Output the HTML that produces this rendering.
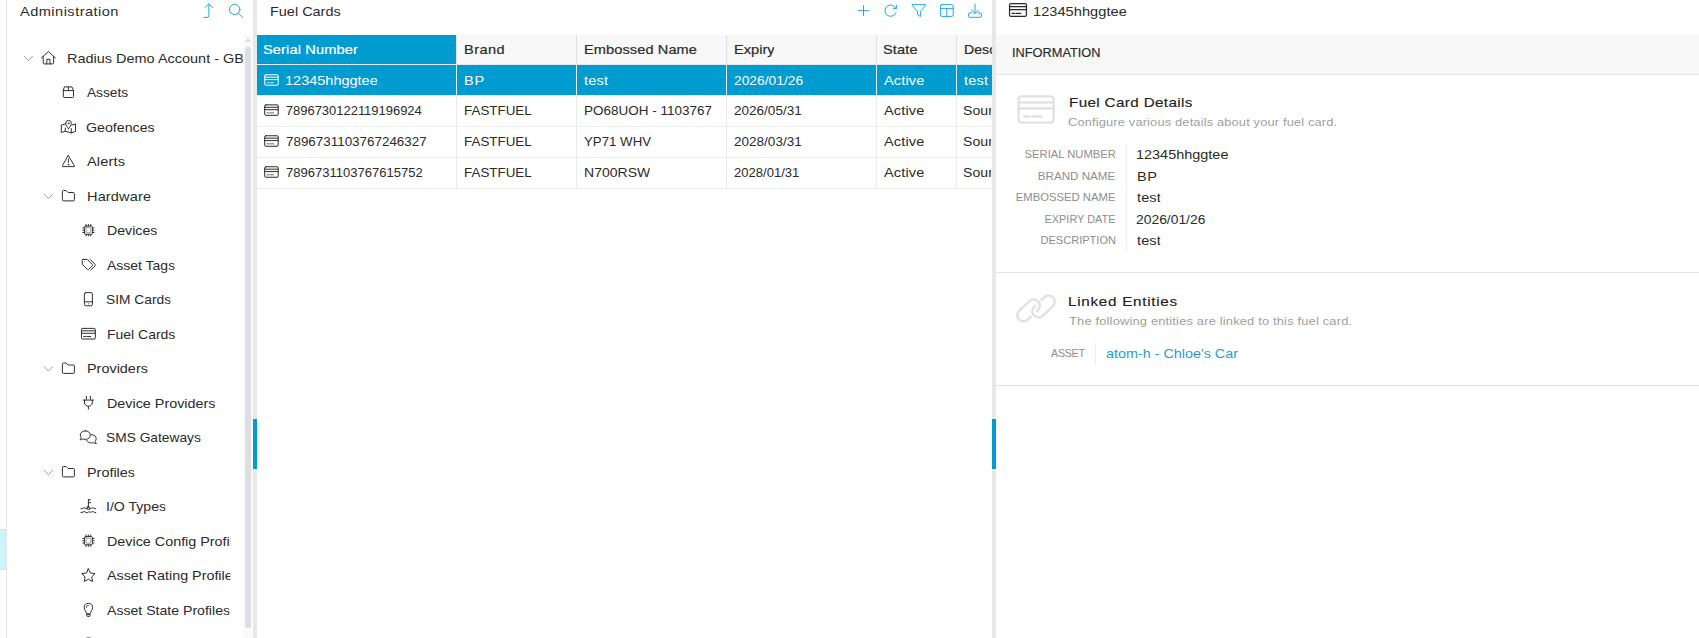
<!DOCTYPE html><html><head><meta charset="utf-8"><title>Fuel Cards</title><style>
html,body{margin:0;padding:0}body{width:1699px;height:638px;position:relative;overflow:hidden;background:#fff;font-family:"Liberation Sans", sans-serif;}
.t{position:absolute;white-space:nowrap;line-height:20px;height:20px;overflow:hidden}
.b{position:absolute}
</style></head><body>
<div class="b" style="left:0;top:529px;width:6px;height:39px;background:#ccf2fa;border-top:1px solid #dfe3e4;border-bottom:1px solid #dfe3e4"></div>
<div class="b" style="left:6px;top:0;width:1px;height:638px;background:#e4e4e4"></div>
<div class="b" style="left:243px;top:35px;width:10px;height:603px;background:#fafafa"></div>
<div class="b" style="left:245px;top:47px;width:6px;height:581px;background:#dddee1;border-radius:2.5px"></div>
<div class="b" style="left:245px;top:38px;width:0;height:0;border-left:3px solid transparent;border-right:3px solid transparent;border-bottom:4px solid #dcdde0"></div>
<div class="b" style="left:253px;top:0;width:4px;height:638px;background:#e8e8e8"></div>
<div class="b" style="left:253px;top:419px;width:4px;height:50px;background:#009bcf"></div>
<div class="b" style="left:992px;top:0;width:4px;height:638px;background:#e8e8e8"></div>
<div class="b" style="left:992px;top:419px;width:4px;height:50px;background:#009bcf"></div>
<div class="b" style="left:257px;top:35px;width:735px;height:154px;overflow:hidden">
<div class="b" style="left:0;top:0;width:735px;height:29px;background:#f8f8f8"></div>
<div class="b" style="left:0;top:0;width:199px;height:29px;background:#009bcf"></div>
<div class="b" style="left:0;top:30px;width:735px;height:30px;background:#009bcf"></div>
<div class="b" style="left:0;top:29px;width:735px;height:1px;background:#e6e6e6"></div>
<div class="b" style="left:0;top:60px;width:735px;height:1px;background:#efefef"></div>
<div class="b" style="left:0;top:91px;width:735px;height:1px;background:#efefef"></div>
<div class="b" style="left:0;top:122px;width:735px;height:1px;background:#efefef"></div>
<div class="b" style="left:0;top:153px;width:735px;height:1px;background:#efefef"></div>
<div class="b" style="left:199px;top:0;width:1px;height:153px;background:#eaeaea"></div>
<div class="b" style="left:199px;top:0;width:1px;height:29px;background:#e0e0e0"></div>
<div class="b" style="left:319px;top:0;width:1px;height:153px;background:#eaeaea"></div>
<div class="b" style="left:319px;top:0;width:1px;height:29px;background:#e0e0e0"></div>
<div class="b" style="left:469px;top:0;width:1px;height:153px;background:#eaeaea"></div>
<div class="b" style="left:469px;top:0;width:1px;height:29px;background:#e0e0e0"></div>
<div class="b" style="left:619px;top:0;width:1px;height:153px;background:#eaeaea"></div>
<div class="b" style="left:619px;top:0;width:1px;height:29px;background:#e0e0e0"></div>
<div class="b" style="left:699px;top:0;width:1px;height:153px;background:#eaeaea"></div>
<div class="b" style="left:699px;top:0;width:1px;height:29px;background:#e0e0e0"></div>
</div>
<div class="b" style="left:996px;top:35px;width:703px;height:39px;background:#f8f8f8"></div>
<div class="b" style="left:996px;top:74px;width:703px;height:1px;background:#e3e3e3"></div>
<div class="b" style="left:996px;top:272px;width:703px;height:1px;background:#e3e3e3"></div>
<div class="b" style="left:996px;top:385px;width:703px;height:1px;background:#e3e3e3"></div>
<div class="b" style="left:1126px;top:144px;width:1px;height:108px;background:#eee"></div>
<div class="b" style="left:1095px;top:343px;width:1px;height:22px;background:#eee"></div>
<aside class="panel tree-panel">
<div class="t" id="t0" style="top:1.75px;font-size:13px;color:#2b2b2b;letter-spacing:0.427px;left:19.97px;transform:scaleX(1.1200);transform-origin:0 0;">Administration</div>
<div class="t" id="t1" style="top:48.75px;font-size:13px;color:#2b2b2b;left:66.76px;transform:scaleX(1.1131);transform-origin:0 0;max-width:158.33px;">Radius Demo Account - GB</div>
<div class="t" id="t2" style="top:82.75px;font-size:13px;color:#2b2b2b;letter-spacing:0.000px;left:86.77px;transform:scaleX(1.0514);transform-origin:0 0;max-width:148.59px;">Assets</div>
<div class="t" id="t3" style="top:117.75px;font-size:13px;color:#2b2b2b;left:86.29px;transform:scaleX(1.0931);transform-origin:0 0;max-width:143.37px;">Geofences</div>
<div class="t" id="t4" style="top:151.75px;font-size:13px;color:#2b2b2b;letter-spacing:0.131px;left:86.77px;transform:scaleX(1.1200);transform-origin:0 0;max-width:139.49px;">Alerts</div>
<div class="t" id="t5" style="top:186.75px;font-size:13px;color:#2b2b2b;letter-spacing:0.117px;left:86.51px;transform:scaleX(1.1200);transform-origin:0 0;max-width:139.73px;">Hardware</div>
<div class="t" id="t6" style="top:220.75px;font-size:13px;color:#2b2b2b;left:106.54px;transform:scaleX(1.0891);transform-origin:0 0;max-width:113.17px;">Devices</div>
<div class="t" id="t7" style="top:255.75px;font-size:13px;color:#2b2b2b;left:106.77px;transform:scaleX(1.0753);transform-origin:0 0;max-width:114.41px;">Asset Tags</div>
<div class="t" id="t8" style="top:289.75px;font-size:13px;color:#2b2b2b;letter-spacing:-0.000px;left:106.37px;transform:scaleX(1.0589);transform-origin:0 0;max-width:116.56px;">SIM Cards</div>
<div class="t" id="t9" style="top:324.75px;font-size:13px;color:#2b2b2b;left:106.55px;transform:scaleX(1.0751);transform-origin:0 0;max-width:114.64px;">Fuel Cards</div>
<div class="t" id="t10" style="top:358.75px;font-size:13px;color:#2b2b2b;left:86.52px;transform:scaleX(1.1089);transform-origin:0 0;max-width:141.11px;">Providers</div>
<div class="t" id="t11" style="top:393.75px;font-size:13px;color:#2b2b2b;left:106.52px;transform:scaleX(1.1031);transform-origin:0 0;max-width:111.76px;">Device Providers</div>
<div class="t" id="t12" style="top:427.75px;font-size:13px;color:#2b2b2b;left:106.18px;transform:scaleX(1.0584);transform-origin:0 0;max-width:116.81px;">SMS Gateways</div>
<div class="t" id="t13" style="top:462.75px;font-size:13px;color:#2b2b2b;left:86.52px;transform:scaleX(1.1070);transform-origin:0 0;max-width:141.35px;">Profiles</div>
<div class="t" id="t14" style="top:496.75px;font-size:13px;color:#2b2b2b;left:106.40px;transform:scaleX(1.0831);transform-origin:0 0;max-width:113.94px;">I/O Types</div>
<div class="t" id="t15" style="top:531.75px;font-size:13px;color:#2b2b2b;letter-spacing:-0.000px;left:106.52px;transform:scaleX(1.1032);transform-origin:0 0;max-width:111.74px;">Device Config Profiles</div>
<div class="t" id="t16" style="top:565.75px;font-size:13px;color:#2b2b2b;letter-spacing:-0.000px;left:106.77px;transform:scaleX(1.1009);transform-origin:0 0;max-width:111.75px;">Asset Rating Profiles</div>
<div class="t" id="t17" style="top:600.75px;font-size:13px;color:#2b2b2b;left:106.77px;transform:scaleX(1.0845);transform-origin:0 0;max-width:113.44px;">Asset State Profiles</div>
</aside>
<main class="panel grid-panel">
<div class="t" id="t18" style="top:1.75px;font-size:13px;color:#2b2b2b;left:269.71px;transform:scaleX(1.1121);transform-origin:0 0;">Fuel Cards</div>
<div class="t" id="t19" style="top:39.75px;font-size:13px;color:#fff;letter-spacing:0.137px;-webkit-text-stroke:0.2px #fff;left:263.14px;transform:scaleX(1.1200);transform-origin:0 0;max-width:650.77px;">Serial Number</div>
<div class="t" id="t20" style="top:39.75px;font-size:13px;color:#2b2b2b;letter-spacing:0.394px;-webkit-text-stroke:0.2px #2b2b2b;left:463.61px;transform:scaleX(1.1200);transform-origin:0 0;max-width:471.78px;">Brand</div>
<div class="t" id="t21" style="top:39.75px;font-size:13px;color:#2b2b2b;letter-spacing:0.093px;-webkit-text-stroke:0.2px #2b2b2b;left:583.71px;transform:scaleX(1.1200);transform-origin:0 0;max-width:364.55px;">Embossed Name</div>
<div class="t" id="t22" style="top:39.75px;font-size:13px;color:#2b2b2b;letter-spacing:0.029px;-webkit-text-stroke:0.2px #2b2b2b;left:733.61px;transform:scaleX(1.1200);transform-origin:0 0;max-width:230.71px;">Expiry</div>
<div class="t" id="t23" style="top:39.75px;font-size:13px;color:#2b2b2b;letter-spacing:0.113px;-webkit-text-stroke:0.2px #2b2b2b;left:883.44px;transform:scaleX(1.1200);transform-origin:0 0;max-width:96.93px;">State</div>
<div class="t" id="t24" style="top:39.75px;font-size:13px;color:#2b2b2b;letter-spacing:0.043px;-webkit-text-stroke:0.2px #2b2b2b;left:963.55px;transform:scaleX(1.0823);transform-origin:0 0;max-width:26.29px;">Description</div>
<div class="t" id="t25" style="top:70.75px;font-size:13px;color:#fff;left:285.10px;transform:scaleX(1.1154);transform-origin:0 0;max-width:633.79px;">12345hhggtee</div>
<div class="t" id="t26" style="top:70.75px;font-size:13px;color:#fff;letter-spacing:0.658px;left:463.61px;transform:scaleX(1.1200);transform-origin:0 0;max-width:471.78px;">BP</div>
<div class="t" id="t27" style="top:70.75px;font-size:13px;color:#fff;letter-spacing:0.191px;left:583.98px;transform:scaleX(1.1200);transform-origin:0 0;max-width:364.30px;">test</div>
<div class="t" id="t28" style="top:70.75px;font-size:13px;color:#fff;letter-spacing:-0.000px;left:733.71px;transform:scaleX(1.0618);transform-origin:0 0;max-width:243.26px;">2026/01/26</div>
<div class="t" id="t29" style="top:70.75px;font-size:13px;color:#fff;letter-spacing:0.129px;left:884.07px;transform:scaleX(1.1200);transform-origin:0 0;max-width:96.36px;">Active</div>
<div class="t" id="t30" style="top:70.75px;font-size:13px;color:#fff;letter-spacing:0.161px;left:964.08px;transform:scaleX(1.1200);transform-origin:0 0;max-width:24.93px;">test</div>
<div class="t" id="t31" style="top:100.75px;font-size:13px;color:#2b2b2b;letter-spacing:-0.025px;left:285.83px;max-width:706.17px;">7896730122119196924</div>
<div class="t" id="t32" style="top:100.75px;font-size:13px;color:#2b2b2b;left:463.70px;transform:scaleX(1.0303);transform-origin:0 0;max-width:512.75px;">FASTFUEL</div>
<div class="t" id="t33" style="top:100.75px;font-size:13px;color:#2b2b2b;left:583.79px;transform:scaleX(1.0385);transform-origin:0 0;max-width:393.09px;">PO68UOH - 1103767</div>
<div class="t" id="t34" style="top:100.75px;font-size:13px;color:#2b2b2b;left:733.72px;transform:scaleX(1.0409);transform-origin:0 0;max-width:248.13px;">2026/05/31</div>
<div class="t" id="t35" style="top:100.75px;font-size:13px;color:#2b2b2b;letter-spacing:0.129px;left:884.07px;transform:scaleX(1.1200);transform-origin:0 0;max-width:96.36px;">Active</div>
<div class="t" id="t36" style="top:100.75px;font-size:13px;color:#2b2b2b;letter-spacing:0.043px;left:963.46px;transform:scaleX(1.0823);transform-origin:0 0;max-width:26.37px;">Source</div>
<div class="t" id="t37" style="top:131.75px;font-size:13px;color:#2b2b2b;left:285.81px;transform:scaleX(1.0312);transform-origin:0 0;max-width:684.82px;">7896731103767246327</div>
<div class="t" id="t38" style="top:131.75px;font-size:13px;color:#2b2b2b;left:463.70px;transform:scaleX(1.0303);transform-origin:0 0;max-width:512.75px;">FASTFUEL</div>
<div class="t" id="t39" style="top:131.75px;font-size:13px;color:#2b2b2b;left:583.51px;transform:scaleX(1.0198);transform-origin:0 0;max-width:400.57px;">YP71 WHV</div>
<div class="t" id="t40" style="top:131.75px;font-size:13px;color:#2b2b2b;left:733.72px;transform:scaleX(1.0409);transform-origin:0 0;max-width:248.13px;">2028/03/31</div>
<div class="t" id="t41" style="top:131.75px;font-size:13px;color:#2b2b2b;letter-spacing:0.129px;left:884.07px;transform:scaleX(1.1200);transform-origin:0 0;max-width:96.36px;">Active</div>
<div class="t" id="t42" style="top:131.75px;font-size:13px;color:#2b2b2b;letter-spacing:0.043px;left:963.46px;transform:scaleX(1.0823);transform-origin:0 0;max-width:26.37px;">Source</div>
<div class="t" id="t43" style="top:162.75px;font-size:13px;color:#2b2b2b;left:285.83px;transform:scaleX(1.0023);transform-origin:0 0;max-width:704.53px;">7896731103767615752</div>
<div class="t" id="t44" style="top:162.75px;font-size:13px;color:#2b2b2b;left:463.70px;transform:scaleX(1.0303);transform-origin:0 0;max-width:512.75px;">FASTFUEL</div>
<div class="t" id="t45" style="top:162.75px;font-size:13px;color:#2b2b2b;left:583.75px;transform:scaleX(1.0794);transform-origin:0 0;max-width:378.22px;">N700RSW</div>
<div class="t" id="t46" style="top:162.75px;font-size:13px;color:#2b2b2b;letter-spacing:0.000px;left:733.74px;transform:scaleX(1.0049);transform-origin:0 0;max-width:257.01px;">2028/01/31</div>
<div class="t" id="t47" style="top:162.75px;font-size:13px;color:#2b2b2b;letter-spacing:0.129px;left:884.07px;transform:scaleX(1.1200);transform-origin:0 0;max-width:96.36px;">Active</div>
<div class="t" id="t48" style="top:162.75px;font-size:13px;color:#2b2b2b;letter-spacing:0.043px;left:963.46px;transform:scaleX(1.0823);transform-origin:0 0;max-width:26.37px;">Source</div>
</main>
<section class="panel details-panel">
<div class="t" id="t49" style="top:1.75px;font-size:13px;color:#2b2b2b;letter-spacing:0.050px;left:1032.99px;transform:scaleX(1.1200);transform-origin:0 0;">12345hhggtee</div>
<div class="t" id="t50" style="top:43.25px;font-size:12px;color:#2a2a2a;letter-spacing:-0.000px;-webkit-text-stroke:0.15px #2a2a2a;left:1012.02px;transform:scaleX(1.0651);transform-origin:0 0;">INFORMATION</div>
<div class="t" id="t51" style="top:92.75px;font-size:13.6px;color:#222;letter-spacing:0.317px;-webkit-text-stroke:0.15px #222;left:1068.75px;transform:scaleX(1.1200);transform-origin:0 0;">Fuel Card Details</div>
<div class="t" id="t52" style="top:112.25px;font-size:11.5px;color:#a0a0a0;letter-spacing:0.124px;left:1068.45px;transform:scaleX(1.1200);transform-origin:0 0;">Configure various details about your fuel card.</div>
<div class="t" id="t53" style="top:144.25px;font-size:10.7px;color:#8e8e8e;right:583.38px;transform:scaleX(1.0509);transform-origin:100% 0;">SERIAL NUMBER</div>
<div class="t" id="t54" style="top:144.75px;font-size:13px;color:#2b2b2b;left:1136.20px;transform:scaleX(1.1117);transform-origin:0 0;">12345hhggtee</div>
<div class="t" id="t55" style="top:166.25px;font-size:10.7px;color:#8e8e8e;right:583.40px;transform:scaleX(1.0868);transform-origin:100% 0;">BRAND NAME</div>
<div class="t" id="t56" style="top:166.75px;font-size:13px;color:#2b2b2b;letter-spacing:0.480px;left:1137.01px;transform:scaleX(1.1200);transform-origin:0 0;">BP</div>
<div class="t" id="t57" style="top:187.25px;font-size:10.7px;color:#8e8e8e;letter-spacing:-0.000px;right:583.42px;transform:scaleX(1.0548);transform-origin:100% 0;">EMBOSSED NAME</div>
<div class="t" id="t58" style="top:187.75px;font-size:13px;color:#2b2b2b;letter-spacing:0.102px;left:1137.48px;transform:scaleX(1.1200);transform-origin:0 0;">test</div>
<div class="t" id="t59" style="top:209.25px;font-size:10.7px;color:#8e8e8e;right:583.43px;transform:scaleX(1.0211);transform-origin:100% 0;">EXPIRY DATE</div>
<div class="t" id="t60" style="top:209.75px;font-size:13px;color:#2b2b2b;left:1136.40px;transform:scaleX(1.0665);transform-origin:0 0;">2026/01/26</div>
<div class="t" id="t61" style="top:230.25px;font-size:10.7px;color:#8e8e8e;right:583.00px;transform:scaleX(1.0351);transform-origin:100% 0;">DESCRIPTION</div>
<div class="t" id="t62" style="top:230.75px;font-size:13px;color:#2b2b2b;letter-spacing:0.102px;left:1137.48px;transform:scaleX(1.1200);transform-origin:0 0;">test</div>
<div class="t" id="t63" style="top:291.75px;font-size:13.6px;color:#222;letter-spacing:0.642px;-webkit-text-stroke:0.15px #222;left:1068.25px;transform:scaleX(1.1200);transform-origin:0 0;">Linked Entities</div>
<div class="t" id="t64" style="top:311.25px;font-size:11.5px;color:#a0a0a0;letter-spacing:0.155px;left:1068.61px;transform:scaleX(1.1200);transform-origin:0 0;">The following entities are linked to this fuel card.</div>
<div class="t" id="t65" style="top:343.25px;font-size:10.7px;color:#8e8e8e;letter-spacing:-0.295px;right:614.35px;">ASSET</div>
<div class="t" id="t66" style="top:343.75px;font-size:13px;color:#1f9ed6;left:1106.19px;transform:scaleX(1.1039);transform-origin:0 0;">atom-h - Chloe's Car</div>
</section>
<svg class="b" style="left:0;top:0;color:#2b2b2b" width="1699" height="638" viewBox="0 0 1699 638" fill="none" stroke="#2b2b2b" stroke-width="0.98" stroke-linecap="round" stroke-linejoin="round">
<g transform="translate(28.40 58.40)" stroke="#a0a0a0" stroke-width="1"><path d="M-4.3,-2.2 L0,2.2 L4.3,-2.2"/></g>
<g transform="translate(48.40 57.70)"><path d="M-7,0.2 L0,-6.2 L7,0.2 M-5.2,-1.2 V5.2 Q-5.2,6.2 -4.2,6.2 H4.2 Q5.2,6.2 5.2,5.2 V-1.2 M-1.6,6.2 V1.6 H1.6 V6.2"/></g>
<g transform="translate(68.40 92.20)"><path d="M-3.6,-5.3 H3.6 L5.1,-1.6 V4.3 Q5.1,5.3 4.1,5.3 H-4.1 Q-5.1,5.3 -5.1,4.3 V-1.6 Z M-5.1,-1.6 H5.1 M0,-5.3 V-1.6"/></g>
<g transform="translate(60.50 119.90)"><path d="M5.3,4.1 L4.8,4 L0.8,5.3 V12.7 L4.8,11.3 L10.8,13 L15,11.5 V4 L11.3,5.2 M4.8,8.2 V11.3 M10.8,8.6 V13"/><path d="M8,8.8 C6.4,6.8 5.2,5 5.2,3.3 A2.8,2.8 0 0 1 10.8,3.3 C10.8,5 9.6,6.8 8,8.8 Z"/><circle cx="8" cy="3.4" r="0.45" fill="currentColor"/></g>
<g transform="translate(68.40 161.20)"><path d="M0,-5.6 L6.1,4.9 Q6.3,5.4 5.7,5.4 H-5.7 Q-6.3,5.4 -6.1,4.9 Z M0,-2.2 V1.2"/><circle cx="0" cy="3.3" r="0.4" fill="currentColor"/></g>
<g transform="translate(48.40 196.40)" stroke="#a0a0a0" stroke-width="1"><path d="M-4.3,-2.2 L0,2.2 L4.3,-2.2"/></g>
<g transform="translate(68.40 195.70)"><path d="M-6,-4.2 Q-6,-5.2 -5,-5.2 H-2.3 L-0.3,-3.2 H5 Q6,-3.2 6,-2.2 V4.2 Q6,5.2 5,5.2 H-5 Q-6,5.2 -6,4.2 Z"/></g>
<g transform="translate(88.40 230.20)"><rect x="-4" y="-4.1" width="8" height="8.2" rx="1.1"/><rect x="-2.4" y="-2.5" width="4.8" height="5" rx="0.3" stroke="#909090" stroke-width="0.9"/><path d="M-2.3,-4.1 V-6.1 M-2.3,4.1 V6.1 M-4,-2.3 H-6 M4,-2.3 H6 M0,-4.1 V-6.1 M0,4.1 V6.1 M-4,0 H-6 M4,0 H6 M2.3,-4.1 V-6.1 M2.3,4.1 V6.1 M-4,2.3 H-6 M4,2.3 H6 " stroke-linecap="butt"/></g>
<g transform="translate(81.40 258.40)"><path d="M1.7,1 H5.8 L11,6.2 Q11.4,6.8 11,7.4 L7.3,11 Q6.7,11.5 6.1,11 L0.8,5.8 V1.9 Q0.8,1 1.7,1 Z"/><path d="M8.9,1.1 L13.6,5.9 Q14.2,6.7 13.6,7.5 L9.4,11.8"/><circle cx="3.1" cy="3.4" r="0.45" fill="currentColor" stroke="none"/></g>
<g transform="translate(88.40 299.20)"><rect x="-4" y="-6.6" width="8" height="13.2" rx="1.5"/><path d="M-4,2.6 H4"/><circle cx="0" cy="4.6" r="0.5" fill="currentColor" stroke="none"/></g>
<g transform="translate(88.40 333.70)"><rect x="-6.95" y="-5.31" width="13.90" height="10.63" rx="1.18"/><path d="M-6.95,-2.86 H6.95 M-6.95,-0.41 H6.95"/><path d="M-4.73,2.86 H-2.64 M-1.46,2.86 H2.29"/></g>
<g transform="translate(48.40 368.90)" stroke="#a0a0a0" stroke-width="1"><path d="M-4.3,-2.2 L0,2.2 L4.3,-2.2"/></g>
<g transform="translate(68.40 368.20)"><path d="M-6,-4.2 Q-6,-5.2 -5,-5.2 H-2.3 L-0.3,-3.2 H5 Q6,-3.2 6,-2.2 V4.2 Q6,5.2 5,5.2 H-5 Q-6,5.2 -6,4.2 Z"/></g>
<g transform="translate(88.40 402.70)"><path d="M-2,-6.4 V-3.4 M2,-6.4 V-3.4 M-5.2,-2.6 H5.2 M-3.9,-2.6 V0.3 C-3.9,2.2 -1.8,3.4 0,3.6 C1.8,3.4 3.9,2.2 3.9,0.3 V-2.6 M0,3.6 V6.4"/></g>
<g transform="translate(88.40 437.20)"><path d="M-3.1,-6.4 C-0.3,-6.4 1.9,-4.5 1.9,-2.1 C1.9,0.3 -0.3,2.2 -3.1,2.2 C-4,2.2 -4.8,2 -5.5,1.7 C-6.3,2.3 -7.3,2.6 -8.4,2.6 C-7.7,1.9 -7.4,1.2 -7.3,0.6 C-7.8,-0.1 -8.1,-1.1 -8.1,-2.1 C-8.1,-4.5 -5.9,-6.4 -3.1,-6.4 Z"/><path d="M2.8,-2.6 C5.6,-2.6 7.8,-0.8 7.8,1.4 C7.8,2.5 7.4,3.4 6.8,4.1 C6.9,4.8 7.3,5.6 8,6.3 C6.9,6.3 5.8,6 5,5.4 C4.4,5.6 3.6,5.7 2.8,5.7 C0.8,5.7 -0.9,4.7 -1.7,3.2"/></g>
<g transform="translate(48.40 472.40)" stroke="#a0a0a0" stroke-width="1"><path d="M-4.3,-2.2 L0,2.2 L4.3,-2.2"/></g>
<g transform="translate(68.40 471.70)"><path d="M-6,-4.2 Q-6,-5.2 -5,-5.2 H-2.3 L-0.3,-3.2 H5 Q6,-3.2 6,-2.2 V4.2 Q6,5.2 5,5.2 H-5 Q-6,5.2 -6,4.2 Z"/></g>
<g transform="translate(88.40 506.20)"><path d="M0,-6.4 V1 M0,-6.4 H2 M0,-3.5 H2.2"/><path d="M-7.4,2.6 Q-6.2,2.6 -5.3,1.9 Q-4.3,1.2 -3.3,1.9 Q-2.4,2.6 -1.3,2.6 M1.3,2.6 Q2.4,2.6 3.3,1.9 Q4.3,1.2 5.3,1.9 Q6.2,2.6 7.4,2.6"/><rect x="-1.3" y="0.6" width="2.6" height="2.4" rx="0.5"/><path d="M-7.4,6.4 Q-6.2,6.4 -5.3,5.7 Q-4.3,5 -3.3,5.7 Q-2.4,6.4 -1.3,6.4 Q-0.5,6.4 0,5.9 Q0.6,5.3 1.3,5.7 Q2.4,6.4 3.3,5.7 Q4.3,5 5.3,5.7 Q6.2,6.4 7.4,6.4"/></g>
<g transform="translate(88.40 540.70)"><rect x="-4" y="-4.1" width="8" height="8.2" rx="1.1"/><rect x="-2.4" y="-2.5" width="4.8" height="5" rx="0.3" stroke="#909090" stroke-width="0.9"/><path d="M-2.3,-4.1 V-6.1 M-2.3,4.1 V6.1 M-4,-2.3 H-6 M4,-2.3 H6 M0,-4.1 V-6.1 M0,4.1 V6.1 M-4,0 H-6 M4,0 H6 M2.3,-4.1 V-6.1 M2.3,4.1 V6.1 M-4,2.3 H-6 M4,2.3 H6 " stroke-linecap="butt"/></g>
<g transform="translate(88.40 575.20)"><polygon points="0.00,-6.40 2.06,-2.23 6.66,-1.56 3.33,1.68 4.11,6.26 0.00,4.10 -4.11,6.26 -3.33,1.68 -6.66,-1.56 -2.06,-2.23"/></g>
<g transform="translate(88.40 609.70)"><path d="M-1.9,3.7 C-1.9,1.9 -4.1,0.7 -4.1,-2.2 A4.1,4.1 0 0 1 4.1,-2.2 C4.1,0.7 1.9,1.9 1.9,3.7 Z"/><path d="M-1.7,5.3 V5.8 Q-1.7,6.7 -0.8,6.7 H0.8 Q1.7,6.7 1.7,5.8 V5.3 Z"/><path d="M-2.2,-2.2 A2.2,2.2 0 0 1 0,-4.4" stroke-width="0.8"/></g>
<g transform="translate(88.40 644.20)"><path d="M-1.9,3.7 C-1.9,1.9 -4.1,0.7 -4.1,-2.2 A4.1,4.1 0 0 1 4.1,-2.2 C4.1,0.7 1.9,1.9 1.9,3.7 Z"/><path d="M-1.7,5.3 V5.8 Q-1.7,6.7 -0.8,6.7 H0.8 Q1.7,6.7 1.7,5.8 V5.3 Z"/><path d="M-2.2,-2.2 A2.2,2.2 0 0 1 0,-4.4" stroke-width="0.8"/></g>
<g stroke="#25a7e1" stroke-width="1"><path d="M204.9,7.6 L208.9,3.9 L212.9,7.6 M208.9,4.2 V15.5 Q208.9,17.4 207,17.4 H203.8"/><circle cx="234.7" cy="9.4" r="5.2"/><path d="M238.5,13.2 L243,17.7"/><path d="M858.5,10.6 H868.5 M863.5,5.6 V15.6"/><path d="M896,8.6 A5.7,5.7 0 1 0 896,12.7"/><path d="M896.6,5.2 V8.7 H893.1"/><path d="M912.3,4.6 H925.5 Q926,4.9 925.5,5.5 L920.4,11.4 V16.6 L917.4,14.4 V11.4 L912.3,5.5 Q911.9,4.9 912.3,4.6 Z"/><rect x="940.4" y="4.6" width="12.8" height="11.8" rx="1.5"/><path d="M940.4,8.4 H953.2 M946.8,8.4 V16.4"/><path d="M975,4 V13.4 M971.6,10.2 L975,13.6 L978.4,10.2 M972.2,12.9 H969.7 Q968.6,12.9 968.6,14 V16.2 Q968.6,17.3 969.7,17.3 H980.3 Q981.4,17.3 981.4,16.2 V14 Q981.4,12.9 980.3,12.9 H977.8"/><circle cx="979.3" cy="15.1" r="0.5" fill="#25a7e1" stroke="none"/></g>
<g transform="translate(271.45 80.00)" stroke="#fff" stroke-width="1.0"><rect x="-6.75" y="-5.25" width="13.50" height="10.50" rx="1.15"/><path d="M-6.75,-2.82 H6.75 M-6.75,-0.40 H6.75"/><path d="M-4.59,2.82 H-2.57 M-1.42,2.82 H2.23" stroke="#c8e9f5"/></g>
<g transform="translate(271.45 110.10)" stroke="#2b2b2b" stroke-width="1.0"><rect x="-6.75" y="-5.25" width="13.50" height="10.50" rx="1.15"/><path d="M-6.75,-2.82 H6.75 M-6.75,-0.40 H6.75"/><path d="M-4.59,2.82 H-2.57 M-1.42,2.82 H2.23" stroke="#666"/></g>
<g transform="translate(271.45 141.00)" stroke="#2b2b2b" stroke-width="1.0"><rect x="-6.75" y="-5.25" width="13.50" height="10.50" rx="1.15"/><path d="M-6.75,-2.82 H6.75 M-6.75,-0.40 H6.75"/><path d="M-4.59,2.82 H-2.57 M-1.42,2.82 H2.23" stroke="#666"/></g>
<g transform="translate(271.45 172.00)" stroke="#2b2b2b" stroke-width="1.0"><rect x="-6.75" y="-5.25" width="13.50" height="10.50" rx="1.15"/><path d="M-6.75,-2.82 H6.75 M-6.75,-0.40 H6.75"/><path d="M-4.59,2.82 H-2.57 M-1.42,2.82 H2.23" stroke="#666"/></g>
<g transform="translate(1018.00 10.00)" stroke="#2b2b2b" stroke-width="1.25"><rect x="-8.45" y="-6.35" width="16.90" height="12.70" rx="1.44"/><path d="M-8.45,-3.42 H8.45 M-8.45,-0.49 H8.45"/><path d="M-5.75,3.42 H-3.21 M-1.77,3.42 H2.79"/></g>
<g transform="translate(1036.10 109.50)" stroke="#e2e2e2" stroke-width="2.4"><rect x="-17.50" y="-13.15" width="35.00" height="26.30" rx="2.98"/><path d="M-17.50,-7.07 H17.50 M-17.50,-1.01 H17.50"/><path d="M-11.90,7.07 H-6.65 M-3.67,7.07 H5.78"/></g>
<g stroke="#e2e2e2" stroke-width="2.5"><path transform="translate(1028.5 310.4) rotate(-43)" d="M-2.6,6.2 L-6.9,6.2 A6.2,6.2 0 0 1 -6.9,-6.2 L6.9,-6.2 A6.2,6.2 0 0 1 6.9,6.2 L5.8,6.2"/><path transform="translate(1043.55 306.5) rotate(-43)" d="M2.6,-6.2 L6.9,-6.2 A6.2,6.2 0 0 1 6.9,6.2 L-6.9,6.2 A6.2,6.2 0 0 1 -6.9,-6.2 L-5.8,-6.2"/></g>
</svg>
</body></html>
